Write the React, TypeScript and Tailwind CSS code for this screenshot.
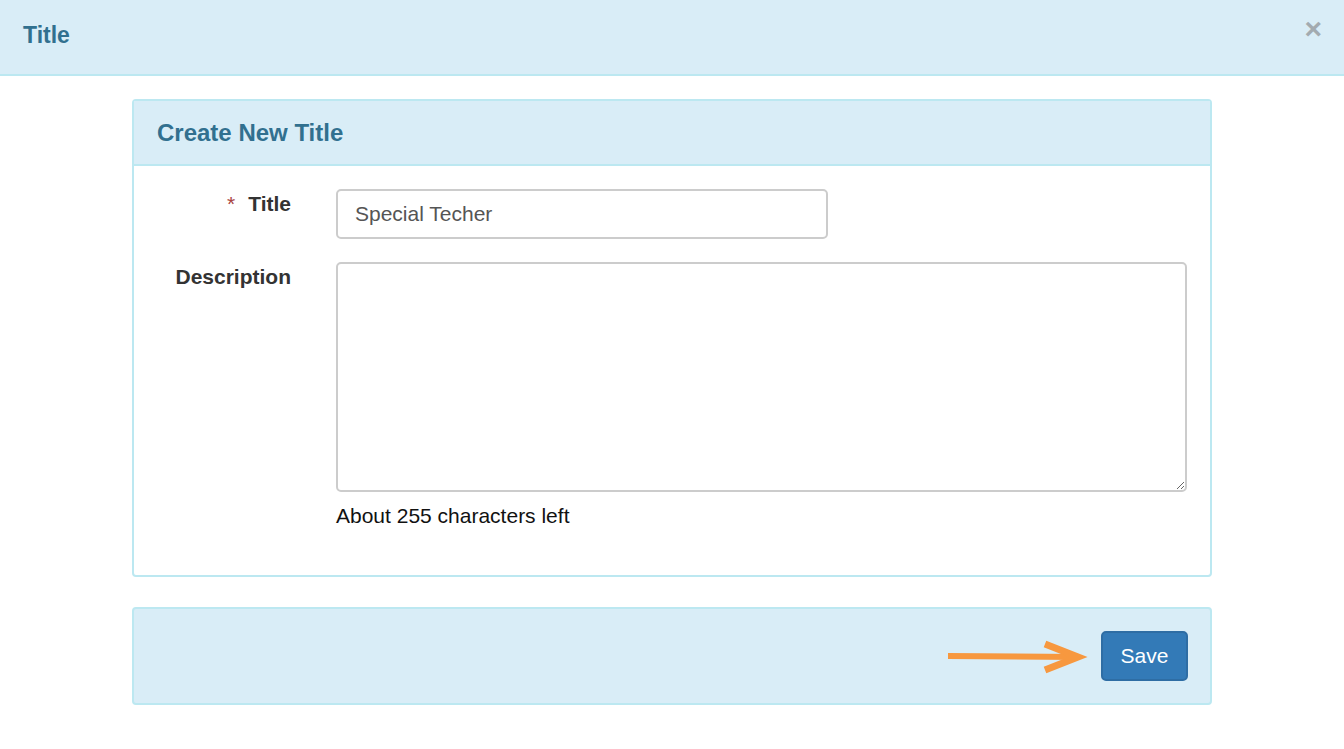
export default function App() {
  return (
    <div className="min-h-[749px] bg-white font-['Liberation_Sans',Arial,sans-serif]">
      {/* modal header */}
      <div className="flex h-[76px] items-start justify-between border-b-2 border-[#bce8f1] bg-[#d9edf7] pl-[23px] pr-[22px]">
        <h1 className="pt-[20px] text-[23px] font-bold leading-[30px] text-[#31708f]">Title</h1>
        <button type="button" className="pt-[12px] text-[30px] font-bold leading-[34px] text-[#a3abb0]">
          ×
        </button>
      </div>

      <div className="mx-[132px] pt-[23px]">
        {/* form panel */}
        <div className="rounded-[4px] border-2 border-[#bce8f1]">
          <div className="flex h-[65px] items-center border-b-2 border-[#bce8f1] bg-[#d9edf7] px-[23px]">
            <h2 className="text-[24px] font-bold text-[#31708f]">Create New Title</h2>
          </div>
          <div className="px-[23px] pb-[45px] pt-[23px]">
            <div className="flex items-start gap-[45px]">
              <label className="w-[134px] shrink-0 pt-[1px] text-right text-[21px] font-bold leading-[28px] text-[#333]">
                <span className="mr-[13px] font-normal text-[#a94442]">*</span>Title
              </label>
              <input
                type="text"
                defaultValue="Special Techer"
                className="h-[50px] w-[492px] rounded-[5px] border-2 border-[#ccc] px-[17px] text-[21px] text-[#555] outline-none"
              />
            </div>
            <div className="mt-[23px] flex items-start gap-[45px]">
              <label className="w-[134px] shrink-0 pt-[1px] text-right text-[21px] font-bold leading-[28px] text-[#333]">
                Description
              </label>
              <div className="flex-1">
                <textarea className="block h-[230px] w-full rounded-[5px] border-2 border-[#ccc] px-[17px] py-[10px] text-[21px] text-[#555] outline-none" />
                <p className="mt-[10px] text-[21px] leading-[28px] text-[#111]">About 255 characters left</p>
              </div>
            </div>
          </div>
        </div>

        {/* footer panel */}
        <div className="mt-[30px] flex h-[98px] items-center justify-end rounded-[4px] border-2 border-[#bce8f1] bg-[#d9edf7] pr-[22px]">
          <svg width="150" height="40" viewBox="0 0 150 40" className="mr-[8px]">
            <path d="M5 20 L134 21" stroke="#f7983f" strokeWidth="6" strokeLinecap="butt" fill="none" />
            <path d="M102 8 L135 21 L102 34" stroke="#f7983f" strokeWidth="7" strokeLinejoin="miter" fill="none" />
          </svg>
          <button
            type="button"
            className="h-[50px] w-[87px] rounded-[5px] border-2 border-[#2e6da4] bg-[#337ab7] text-[21px] text-white"
          >
            Save
          </button>
        </div>
      </div>
    </div>
  );
}
